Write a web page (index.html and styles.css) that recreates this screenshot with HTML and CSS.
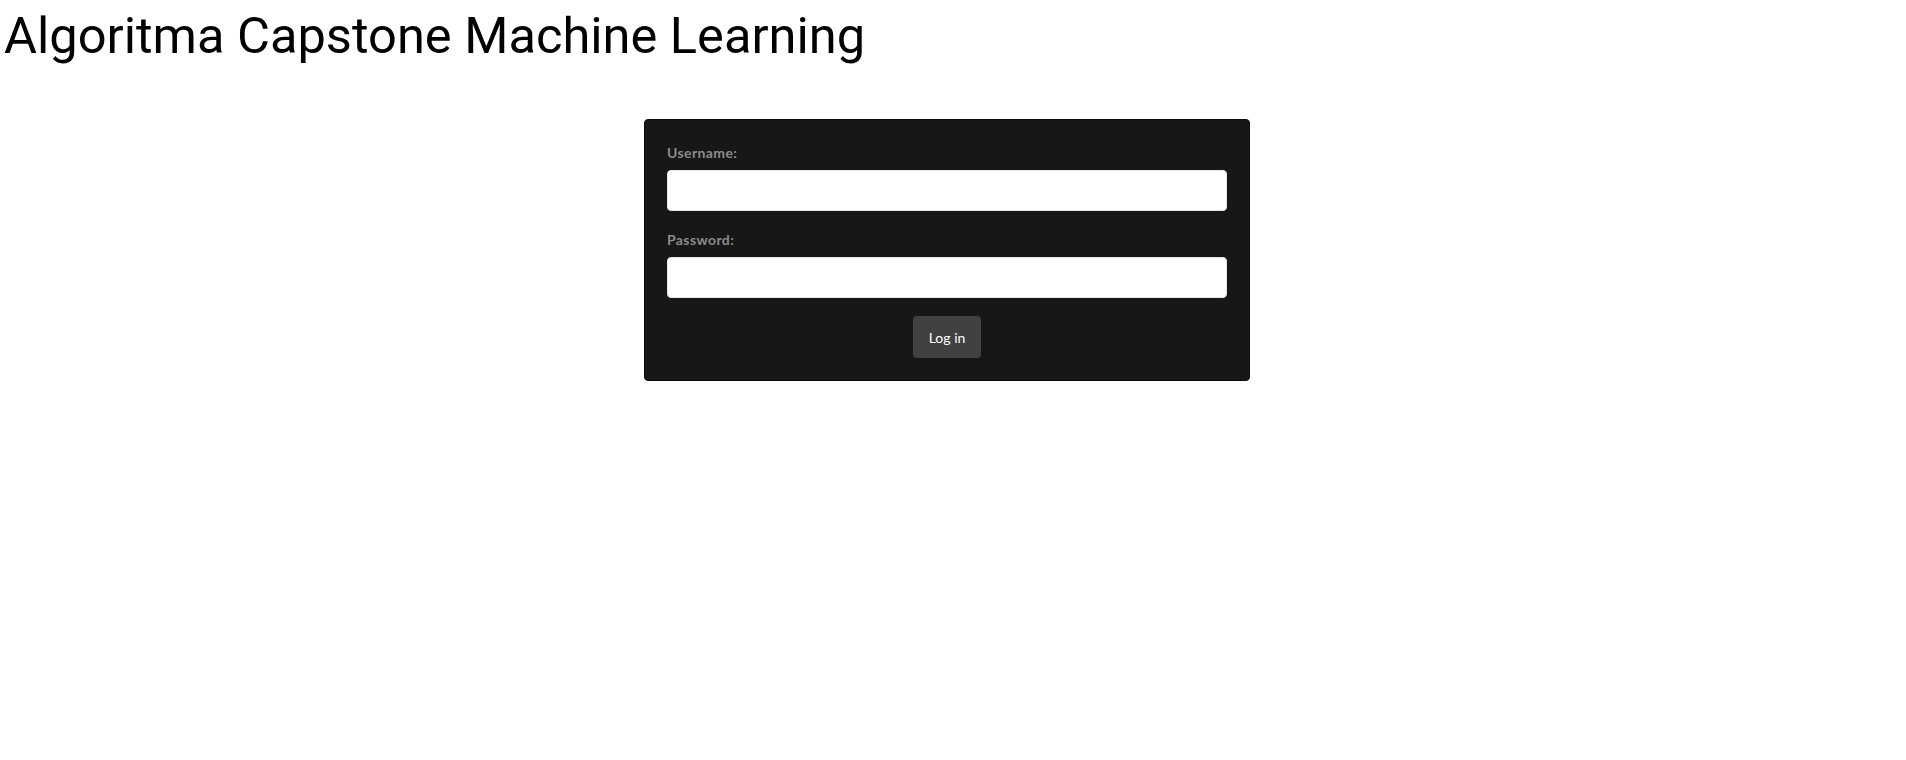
FILE: index.html
```html
<!DOCTYPE html>
<html>
<head>
<meta charset="utf-8">
<link rel="stylesheet" href="styles.css">
</head>
<body>
<h1 class="title">Algoritma Capstone Machine Learning</h1>
<div class="wrap">
  <form class="card">
    <label class="label" for="u">Username:</label>
    <input class="field" id="u" type="text">
    <label class="label" for="p">Password:</label>
    <input class="field" id="p" type="password">
    <div class="actions">
      <button class="btn" type="button">Log in</button>
    </div>
  </form>
</div>
</body>
</html>
```

FILE: styles.css
```css
html, body {
  margin: 0;
  padding: 0;
  background: #ffffff;
}
body {
  font-family: Roboto, "Liberation Sans", sans-serif;
}
.title {
  margin: 0;
  padding: 7px 0 0 4px;
  font-family: Roboto, sans-serif;
  font-weight: 400;
  font-size: 50.6px;
  line-height: 58px;
  color: #000;
}
.wrap {
  display: flex;
  justify-content: center;
  padding: 54px 12px 0 0;
}
.card {
  width: 606px;
  box-sizing: border-box;
  background: #171717;
  border: 1px solid #0c0c0c;
  border-radius: 4px;
  padding: 24px 22px 22px 22px;
  display: flex;
  flex-direction: column;
  font-family: Lato, "Open Sans", sans-serif;
}
.label {
  font-weight: 700;
  font-size: 14px;
  line-height: 17px;
  letter-spacing: 0.4px;
  color: #8b8b8b;
  margin-bottom: 9px;
}
.field {
  display: block;
  height: 41px;
  box-sizing: border-box;
  border: 1px solid #e6e6e6;
  border-radius: 4px;
  background: #fff;
  margin: 0 0 20px 0;
  padding: 0 10px;
  font-size: 14px;
  outline: none;
}
.actions {
  display: flex;
  justify-content: center;
  margin-top: -2px;
}
.btn {
  width: 68px;
  height: 42px;
  border: none;
  border-radius: 4px;
  background: #414141;
  color: #fff;
  font-family: Lato, "Open Sans", sans-serif;
  font-size: 14px;
  padding: 0;
  cursor: pointer;
}
```
